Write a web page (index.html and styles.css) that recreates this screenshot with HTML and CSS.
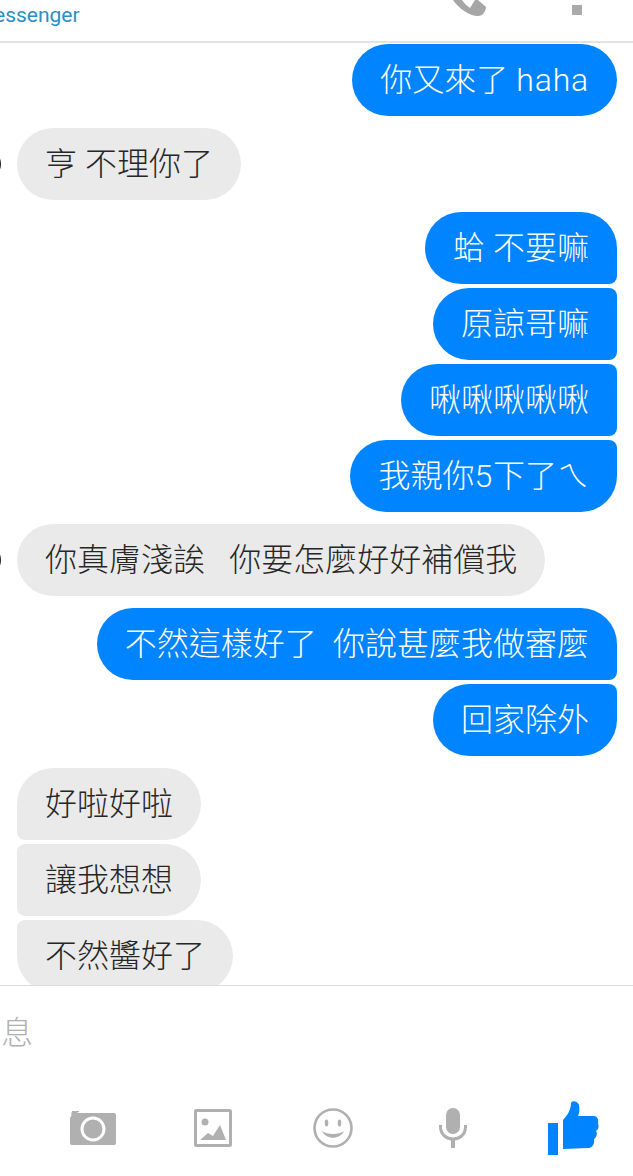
FILE: index.html
```html
<!DOCTYPE html>
<html lang="zh-Hant">
<head>
  <meta charset="UTF-8" />
  <meta name="viewport" content="width=device-width, initial-scale=1.0" />
  <title>Messenger</title>
  <link rel="stylesheet" href="styles.css">
</head>
<body>
  <!-- Top bar, cut off by the crop -->
  <header class="top-bar">
    <span class="app-name">essenger</span>
    <svg class="phone-icon" viewBox="0 0 34 17" width="34" height="17">
      <path d="M1 0 H10 C12 3 15 6 18 8 L23 0 H26 L34 7 C34 10 32 13 30 15 Q26 17 20 15 C12 12 5 6 1 0 Z" fill="#a6a6a6"/>
    </svg>
    <span class="menu-dot"></span>
  </header>

  <!-- Conversation -->
  <main class="messages">
    <div class="bubble me">你又來了 <span class="latin">haha</span></div>

    <div class="bubble them with-avatar">亨 不理你了</div>

    <div class="bubble me first">蛤 不要嘛</div>
    <div class="bubble me middle">原諒哥嘛</div>
    <div class="bubble me middle">啾啾啾啾啾</div>
    <div class="bubble me last">我親你<span class="latin">5</span>下了ㄟ</div>

    <div class="bubble them with-avatar">你真膚淺誒&nbsp;&nbsp;&nbsp;你要怎麼好好補償我</div>

    <div class="bubble me first">不然這樣好了&nbsp;&nbsp;你說甚麼我做審麼</div>
    <div class="bubble me last">回家除外</div>

    <div class="bubble them first">好啦好啦</div>
    <div class="bubble them middle">讓我想想</div>
    <div class="bubble them last">不然醬好了</div>
  </main>

  <!-- Composer -->
  <footer class="composer">
    <div class="placeholder">息</div>
    <div class="toolbar">
      <svg viewBox="0 0 46 36" width="46" height="36">
        <path d="M1 5 L2 1 H9 L9 2 Z" fill="#b0b0b0"/>
        <path d="M3 3 H44 Q46 3 46 5 V33 Q46 35 44 35 H2 Q0 35 0 33 V8 Z" fill="#b0b0b0"/>
        <circle cx="23" cy="19" r="11" fill="#b0b0b0" stroke="#fff" stroke-width="3"/>
      </svg>
      <svg viewBox="0 0 38 38" width="38" height="38">
        <rect x="1.5" y="1.5" width="35" height="35" rx="1" fill="none" stroke="#b0b0b0" stroke-width="3"/>
        <circle cx="11" cy="13" r="3.5" fill="#b0b0b0"/>
        <path d="M6 31 L14 24 L19 27 L26 16 L32 31 Z" fill="#b0b0b0"/>
      </svg>
      <svg viewBox="0 0 40 40" width="40" height="40">
        <circle cx="20" cy="20" r="18.5" fill="none" stroke="#b0b0b0" stroke-width="2.6"/>
        <ellipse cx="13.5" cy="15" rx="1.8" ry="3.6" fill="#b0b0b0"/>
        <ellipse cx="26.5" cy="15" rx="1.8" ry="3.6" fill="#b0b0b0"/>
        <path d="M9 23 C13 32 27 32 31 23 C26 27 14 27 9 23 Z" fill="#b0b0b0"/>
      </svg>
      <svg viewBox="0 0 28 40" width="28" height="40">
        <rect x="7" y="0" width="14" height="26" rx="7" fill="#b0b0b0"/>
        <path d="M1.5 17 V19 C1.5 27 8 31 14 31 C20 31 26.5 27 26.5 19 V17" fill="none" stroke="#b0b0b0" stroke-width="3"/>
        <rect x="12" y="30" width="4" height="10" fill="#b0b0b0"/>
      </svg>
      <svg viewBox="0 0 51 54" width="51" height="54">
        <rect x="0" y="22" width="10" height="32" fill="#0084ff"/>
        <path d="M15 19 C20 14 23 8 23 2 C24 -1 30 0 31 4 C32 9 31 13 30 15 H45 C49 15 51 18 50 22 C51 25 51 28 48 30 C50 33 48 37 46 38 C47 43 44 47 40 47 L15 48 Z" fill="#0084ff"/>
      </svg>
    </div>
  </footer>
</body>
</html>
```

FILE: styles.css
```css
html, body {
  margin: 0;
  background-color: #fff;
}
body {
  width: 633px;
  height: 1176px;
  overflow: hidden;
  font-family: Roboto, "Noto Sans CJK TC", sans-serif;
}
/* Top bar */
.top-bar {
  height: 41px;
  border-bottom: 2px solid #e3e3e3;
  display: flex;
  align-items: flex-start;
  overflow: hidden;
}
.app-name {
  margin: 1px 0 0 -6px;
  font-size: 21px;
  line-height: 28px;
  color: #2a8fc5;
}
.phone-icon {
  margin-left: auto;
}
.menu-dot {
  width: 10px;
  height: 10px;
  margin: 5px 51px 0 86px;
  background-color: #aaa;
}
/* Conversation */
.messages {
  height: 941px;
  padding: 1px 16px 0 17px;
  display: flex;
  flex-direction: column;
  overflow: hidden;
}
.bubble {
  flex: none;
  height: 72px;
  padding: 0 28px;
  border-radius: 36px;
  margin-top: 12px;
  font-size: 32px;
  font-weight: 300;
  line-height: 72px;
  word-spacing: 0.3px;
  white-space: nowrap;
}
.bubble:first-child {
  margin-top: 0;
}
.latin {
  letter-spacing: 0.8px;
}
.me {
  align-self: flex-end;
  background-color: #0084ff;
  color: #fff;
}
.them {
  align-self: flex-start;
  background-color: #eaeaea;
  color: #262626;
}
.middle, .last {
  margin-top: 4px;
}
.me.first {
  border-bottom-right-radius: 8px;
}
.me.middle {
  border-top-right-radius: 8px;
  border-bottom-right-radius: 8px;
}
.me.last {
  border-top-right-radius: 8px;
}
.them.first {
  border-bottom-left-radius: 8px;
}
.them.middle {
  border-top-left-radius: 8px;
  border-bottom-left-radius: 8px;
}
.them.last {
  border-top-left-radius: 8px;
}
/* Sliver of the avatar next to the bubble */
.with-avatar {
  position: relative;
}
.with-avatar::before {
  content: "";
  position: absolute;
  left: -46px;
  top: 21px;
  width: 30px;
  height: 30px;
  border: 3px solid #222;
  border-radius: 50%;
  box-sizing: border-box;
}
/* Composer */
.composer {
  border-top: 1px solid #dcdcdc;
}
.placeholder {
  height: 95px;
  padding: 26px 0 0 1px;
  box-sizing: border-box;
  font-size: 32px;
  font-weight: 300;
  line-height: 42px;
  color: #b0b0b0;
}
.toolbar {
  height: 94px;
  padding-left: 33px;
  display: grid;
  grid-template-columns: repeat(5, 120px);
  justify-items: center;
  align-items: center;
}
```
